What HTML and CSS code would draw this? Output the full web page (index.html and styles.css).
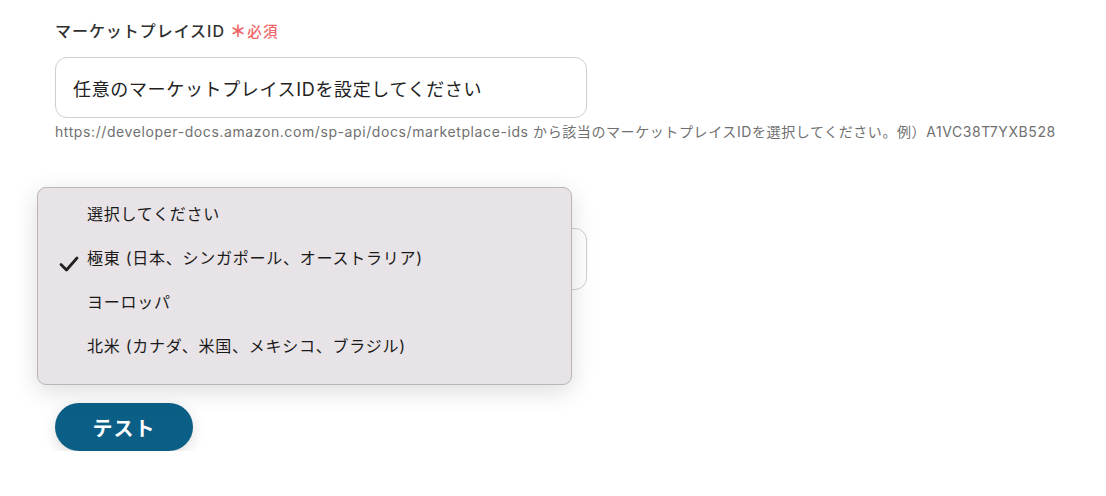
FILE: index.html
```html
<!DOCTYPE html>
<html lang="ja">
<head>
<meta charset="utf-8">
<link rel="stylesheet" href="styles.css">
</head>
<body>
<div class="page">
  <div class="field">
    <div class="label">マーケットプレイスID <span class="req"><span class="star">＊</span>必須</span></div>
    <div class="input">任意のマーケットプレイスIDを設定してください</div>
    <div class="help">https://developer-docs.amazon.com/sp-api/docs/marketplace-ids から該当のマーケットプレイスIDを選択してください。例）A1VC38T7YXB528</div>
  </div>
  <div class="field field2">
    <div class="select"></div>
    <div class="menu">
      <div class="opt">選択してください</div>
      <div class="opt"><svg class="check" viewBox="0 0 20 16" width="20" height="16"><path d="M2 8.5 L7.5 14 L18 2" fill="none" stroke="#222" stroke-width="2.8" stroke-linecap="round" stroke-linejoin="round"/></svg>極東 (日本、シンガポール、オーストラリア)</div>
      <div class="opt">ヨーロッパ</div>
      <div class="opt">北米 (カナダ、米国、メキシコ、ブラジル)</div>
    </div>
  </div>
  <button class="btn">テスト</button>
</div>
</body>
</html>
```
FILE: styles.css
```css
html, body {
  margin: 0;
  background: #fff;
}
body {
  font-family: "Inter", "Noto Sans CJK JP", sans-serif;
  color: #2b2b2b;
}
.page {
  padding: 20px 0 0 55px;
  display: flex;
  flex-direction: column;
  align-items: flex-start;
}
.field {
  display: flex;
  flex-direction: column;
  width: 532px;
}
.label {
  font-size: 16px;
  line-height: 22px;
  font-weight: 500;
  color: #2f2f2f;
  letter-spacing: 0.95px;
}
.req {
  color: #f0676a;
  font-size: 14.5px;
  font-weight: 500;
  letter-spacing: 1.2px;
}
.star {
  font-weight: 900;
  font-size: 16px;
}
.input {
  margin-top: 14px;
  height: 59px;
  border: 1px solid #cfcfcf;
  border-radius: 12px;
  box-sizing: content-box;
  display: flex;
  align-items: center;
  padding-left: 17px;
  font-size: 18px;
  color: #222;
  letter-spacing: 0.65px;
}
.help {
  margin-top: 5px;
  font-size: 14px;
  line-height: 18px;
  color: #707070;
  white-space: nowrap;
  letter-spacing: 0.59px;
}
.field2 {
  position: relative;
  margin-top: 87px;
}
.select {
  height: 60px;
  border: 1px solid #cfcfcf;
  border-radius: 12px;
}
.menu {
  position: absolute;
  left: -18px;
  top: -41px;
  width: 533px;
  height: 192px;
  background: #e8e3e6;
  border: 1px solid #b9b5b8;
  border-radius: 9px;
  box-shadow: 0 6px 24px rgba(0,0,0,0.14);
  box-sizing: content-box;
  padding-top: 4px;
}
.opt {
  position: relative;
  height: 44px;
  line-height: 44px;
  padding-left: 49px;
  font-size: 16px;
  font-weight: 400;
  color: #1a1a1a;
  letter-spacing: 0.75px;
}
.check {
  position: absolute;
  left: 21px;
  top: 20px;
}
.btn {
  margin-top: 113px;
  width: 138px;
  height: 48px;
  border: none;
  border-radius: 24px;
  background: #0b5f86;
  color: #fff;
  font-family: "Inter", "Noto Sans CJK JP", sans-serif;
  font-size: 20px;
  font-weight: 700;
  letter-spacing: 1px;
  box-shadow: 0 4px 14px rgba(0,0,0,0.14);
}
```
